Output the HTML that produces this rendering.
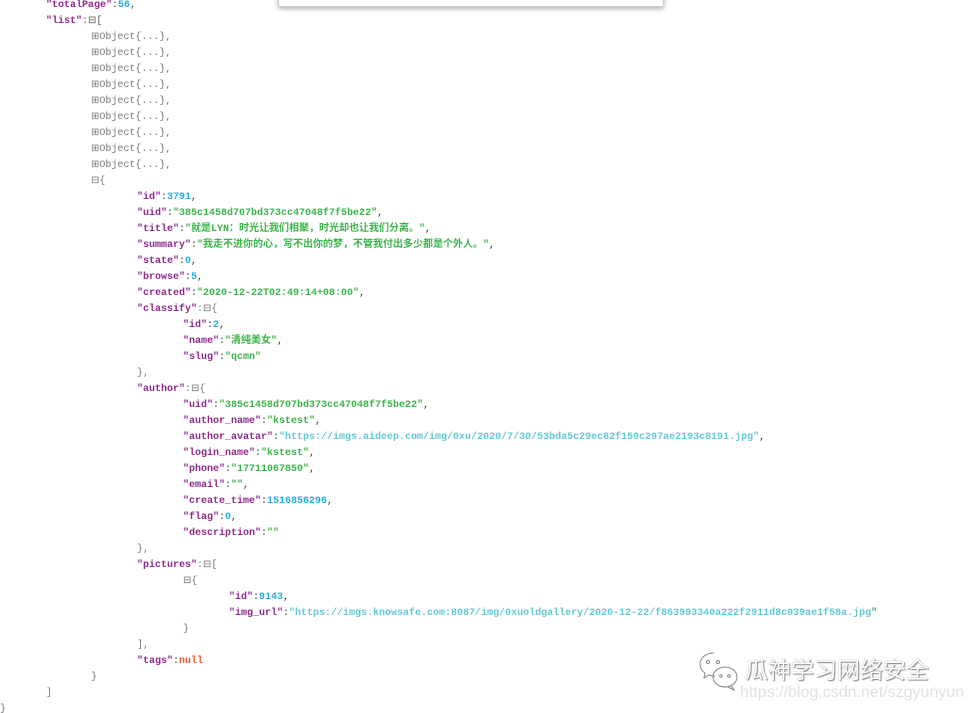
<!DOCTYPE html>
<html><head><meta charset="utf-8"><style>
html,body{margin:0;padding:0;background:#fff;width:969px;height:713px;overflow:hidden;position:relative}
.c{position:absolute;top:-2px;left:0;font-family:"Liberation Mono","Noto Sans CJK SC",monospace;font-size:10px;line-height:16px;white-space:nowrap;color:#333}
.l{height:16px;white-space:pre}
.k{color:#92278f;font-weight:bold}
.s{color:#3ab54a;font-weight:bold}
.n{color:#25aae1;font-weight:bold}
.u{color:#61c9d6;font-weight:bold}
.nl{color:#f1592a;font-weight:bold}
.p{color:#555}
.o{color:#777}
.pop{position:absolute;left:278px;top:-10px;width:384px;height:15px;background:#fff;border:1px solid #ccc;border-radius:3px;box-shadow:0 2px 5px rgba(0,0,0,.3)}
.wm{position:absolute;left:745px;top:653px;font-family:"Noto Sans CJK SC",sans-serif;font-size:23px;line-height:30px;color:#fff;text-shadow:0 0 1px #777,1px 1px 1px #888}
.url{position:absolute;left:740px;top:683px;font-family:"Liberation Sans",sans-serif;font-size:16px;line-height:20px;color:#e0e0e0}
</style></head><body>
<div class="c"><div class="l" style="padding-left:46px"><span class="k">"totalPage"</span><span class="p">:</span><span class="n">56</span><span class="p">,</span></div><div class="l" style="padding-left:46px"><span class="k">"list"</span><span class="p">:⊟[</span></div><div class="l o" style="padding-left:91px">⊞Object{...},</div><div class="l o" style="padding-left:91px">⊞Object{...},</div><div class="l o" style="padding-left:91px">⊞Object{...},</div><div class="l o" style="padding-left:91px">⊞Object{...},</div><div class="l o" style="padding-left:91px">⊞Object{...},</div><div class="l o" style="padding-left:91px">⊞Object{...},</div><div class="l o" style="padding-left:91px">⊞Object{...},</div><div class="l o" style="padding-left:91px">⊞Object{...},</div><div class="l o" style="padding-left:91px">⊞Object{...},</div><div class="l o" style="padding-left:91px">⊟{</div><div class="l" style="padding-left:137px"><span class="k">"id"</span>:<span class="n">3791</span>,</div><div class="l" style="padding-left:137px"><span class="k">"uid"</span>:<span class="s">"385c1458d707bd373cc47048f7f5be22"</span>,</div><div class="l" style="padding-left:137px"><span class="k">"title"</span>:<span class="s">"就是LYN：时光让我们相聚，时光却也让我们分离。"</span>,</div><div class="l" style="padding-left:137px"><span class="k">"summary"</span>:<span class="s">"我走不进你的心，写不出你的梦，不管我付出多少都是个外人。"</span>,</div><div class="l" style="padding-left:137px"><span class="k">"state"</span>:<span class="n">0</span>,</div><div class="l" style="padding-left:137px"><span class="k">"browse"</span>:<span class="n">5</span>,</div><div class="l" style="padding-left:137px"><span class="k">"created"</span>:<span class="s">"2020-12-22T02:49:14+08:00"</span>,</div><div class="l" style="padding-left:137px"><span class="k">"classify"</span><span class="o">:⊟{</span></div><div class="l" style="padding-left:183px"><span class="k">"id"</span>:<span class="n">2</span>,</div><div class="l" style="padding-left:183px"><span class="k">"name"</span>:<span class="s">"清纯美女"</span>,</div><div class="l" style="padding-left:183px"><span class="k">"slug"</span>:<span class="s">"qcmn"</span></div><div class="l o" style="padding-left:137px">},</div><div class="l" style="padding-left:137px"><span class="k">"author"</span><span class="o">:⊟{</span></div><div class="l" style="padding-left:183px"><span class="k">"uid"</span>:<span class="s">"385c1458d707bd373cc47048f7f5be22"</span>,</div><div class="l" style="padding-left:183px"><span class="k">"author_name"</span>:<span class="s">"kstest"</span>,</div><div class="l" style="padding-left:183px"><span class="k">"author_avatar"</span>:<span class="u">"https://imgs.aideep.com/img/0xu/2020/7/30/53bda5c29ec82f150c297ae2193c8191.jpg"</span>,</div><div class="l" style="padding-left:183px"><span class="k">"login_name"</span>:<span class="s">"kstest"</span>,</div><div class="l" style="padding-left:183px"><span class="k">"phone"</span>:<span class="s">"17711067850"</span>,</div><div class="l" style="padding-left:183px"><span class="k">"email"</span>:<span class="s">""</span>,</div><div class="l" style="padding-left:183px"><span class="k">"create_time"</span>:<span class="n">1516856296</span>,</div><div class="l" style="padding-left:183px"><span class="k">"flag"</span>:<span class="n">0</span>,</div><div class="l" style="padding-left:183px"><span class="k">"description"</span>:<span class="s">""</span></div><div class="l o" style="padding-left:137px">},</div><div class="l" style="padding-left:137px"><span class="k">"pictures"</span><span class="o">:⊟[</span></div><div class="l o" style="padding-left:183px">⊟{</div><div class="l" style="padding-left:229px"><span class="k">"id"</span>:<span class="n">9143</span>,</div><div class="l" style="padding-left:229px"><span class="k">"img_url"</span>:<span class="u">"https://imgs.knowsafe.com:8087/img/0xuoldgallery/2020-12-22/f863993340a222f2911d8c039ae1f58a.jpg</span><span class="s">"</span></div><div class="l o" style="padding-left:183px">}</div><div class="l o" style="padding-left:137px">],</div><div class="l" style="padding-left:137px"><span class="k">"tags"</span>:<span class="nl">null</span></div><div class="l o" style="padding-left:91px">}</div><div class="l o" style="padding-left:46px">]</div><div class="l o" style="padding-left:0px">}</div></div>
<div class="pop"></div>
<svg style="position:absolute;left:698px;top:650px" width="42" height="42" viewBox="0 0 42 42" fill="none" stroke="#888" stroke-width="1">
<path d="M16 3C8 3 2 8 2 14c0 4 2 7 5 9l-1 5 5-3c2 1 4 1 6 1"/>
<circle cx="10" cy="12" r="1.5"/><circle cx="20" cy="12" r="1.5"/>
<ellipse cx="27" cy="27" rx="12" ry="10"/>
<path d="M33 35l3 5-6-3"/>
<circle cx="23" cy="26" r="1.3"/><circle cx="31" cy="26" r="1.3"/>
</svg>
<div class="wm">瓜神学习网络安全</div>
<div class="url">https://blog.csdn.net/szgyunyun</div>
</body></html>
